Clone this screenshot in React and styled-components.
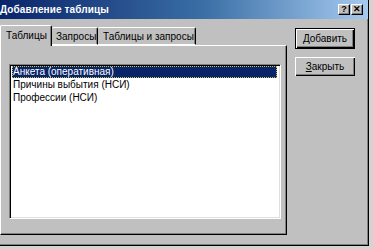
import React from 'react';
import styled, { createGlobalStyle } from 'styled-components';

const GlobalStyle = createGlobalStyle`
  html, body {
    margin: 0;
    padding: 0;
    background: #d4d4d4;
  }
  body {
    font-family: "Liberation Sans", Arial, sans-serif;
    font-size: 10px;
    color: #000;
  }
`;

const Window = styled.div`
  width: 369px;
  height: 246px;
  box-sizing: border-box;
  background: #c0c0c0;
  border-right: 1px solid #000;
  border-bottom: 1px solid #000;
  box-shadow: inset -1px -1px #808080;
  display: flex;
  flex-direction: column;
`;

const TitleBar = styled.div`
  height: 19px;
  flex: none;
  display: flex;
  align-items: center;
  justify-content: space-between;
  padding-right: 5px;
  background: linear-gradient(to right, #0a246a 0%, #3a6ea5 55%, #a6caf0 100%);
`;

const Title = styled.span`
  color: #fff;
  font-weight: bold;
  font-size: 10px;
  letter-spacing: 0.1px;
`;

const CaptionButtons = styled.div`
  display: flex;
  gap: 1px;
`;

const CaptionButton = styled.div`
  width: 12px;
  height: 11px;
  box-sizing: border-box;
  background: #c0c0c0;
  border-top: 1px solid #fff;
  border-left: 1px solid #fff;
  border-right: 1px solid #000;
  border-bottom: 1px solid #000;
  box-shadow: inset -1px -1px #808080;
  display: flex;
  align-items: center;
  justify-content: center;
  font-weight: bold;
  font-size: 9px;
  line-height: 9px;
`;

const Content = styled.div`
  display: flex;
`;

const TabArea = styled.div`
  width: 287px;
  padding-top: 7px;
  display: flex;
  flex-direction: column;
`;

const TabStrip = styled.div`
  display: flex;
  align-items: flex-end;
  height: 20px;
  position: relative;
  z-index: 1;
  margin-bottom: -1px;
`;

const Tab = styled.div`
  width: ${p => p.w}px;
  height: ${p => (p.active ? 21 : 18)}px;
  box-sizing: border-box;
  background: #c0c0c0;
  border-top: 1px solid #fff;
  border-left: ${p => (p.first || p.active ? '1px solid #fff' : 'none')};
  border-right: 1px solid #000;
  box-shadow: inset -1px 0 #808080;
  border-radius: 2px 2px 0 0;
  padding-left: ${p => p.pad}px;
  padding-top: ${p => (p.active ? 4 : 3)}px;
  white-space: nowrap;
  margin-bottom: ${p => (p.active ? 0 : 1)}px;
  border-bottom: ${p => (p.active ? 'none' : '1px solid #fff')};
`;

const Panel = styled.div`
  height: 190px;
  box-sizing: border-box;
  border-top: 1px solid #fff;
  border-left: 1px solid #fff;
  border-right: 1px solid #000;
  border-bottom: 1px solid #000;
  box-shadow: inset -1px -1px #808080;
  padding: 18px 0 0 8px;
`;

const ListBox = styled.div`
  width: 272px;
  height: 155px;
  box-sizing: border-box;
  background: #fff;
  border-top: 1px solid #808080;
  border-left: 1px solid #808080;
  border-right: 1px solid #fff;
  border-bottom: 1px solid #fff;
  box-shadow: inset 1px 1px #000, inset -1px -1px #dfdfdf;
  padding: 1px 3px 2px 2px;
`;

const Row = styled.div`
  height: 12px;
  line-height: 12px;
  padding-left: 1px;
  white-space: nowrap;
  background: ${p => (p.selected ? '#0a246a' : 'transparent')};
  color: ${p => (p.selected ? '#fff' : '#000')};
  outline: ${p => (p.selected ? '1px dotted #c8c050' : 'none')};
  outline-offset: -1px;
  margin-bottom: 1px;
`;

const ButtonColumn = styled.div`
  margin-left: 8px;
  padding-top: 9px;
  display: flex;
  flex-direction: column;
  gap: 8px;
`;

const Button = styled.div`
  width: 60px;
  height: ${p => (p.isDefault ? 21 : 19)}px;
  box-sizing: border-box;
  background: #c0c0c0;
  border: ${p => (p.isDefault ? '1px solid #000' : 'none')};
  display: flex;
  align-items: center;
  justify-content: center;
  box-shadow: inset 1px 1px #fff, inset -1px -1px #000, inset -2px -2px #808080;
  padding-bottom: 1px;
`;

const Key = styled.span`
  text-decoration: underline;
`;

const tables = ['Анкета (оперативная)', 'Причины выбытия (НСИ)', 'Профессии (НСИ)'];

export default function App() {
  return (
    <>
      <GlobalStyle />
      <Window>
        <TitleBar>
          <Title>Добавление таблицы</Title>
          <CaptionButtons>
            <CaptionButton>?</CaptionButton>
            <CaptionButton>✕</CaptionButton>
          </CaptionButtons>
        </TitleBar>
        <Content>
          <TabArea>
            <TabStrip>
              <Tab active first w={52} pad={5}>Таблицы</Tab>
              <Tab w={46} pad={4}>Запросы</Tab>
              <Tab w={98} pad={5}>Таблицы и запросы</Tab>
            </TabStrip>
            <Panel>
              <ListBox>
                {tables.map((t, i) => (
                  <Row key={t} selected={i === 0}>{t}</Row>
                ))}
              </ListBox>
            </Panel>
          </TabArea>
          <ButtonColumn>
            <Button isDefault><Key>Д</Key>обавить</Button>
            <Button><Key>З</Key>акрыть</Button>
          </ButtonColumn>
        </Content>
      </Window>
    </>
  );
}
